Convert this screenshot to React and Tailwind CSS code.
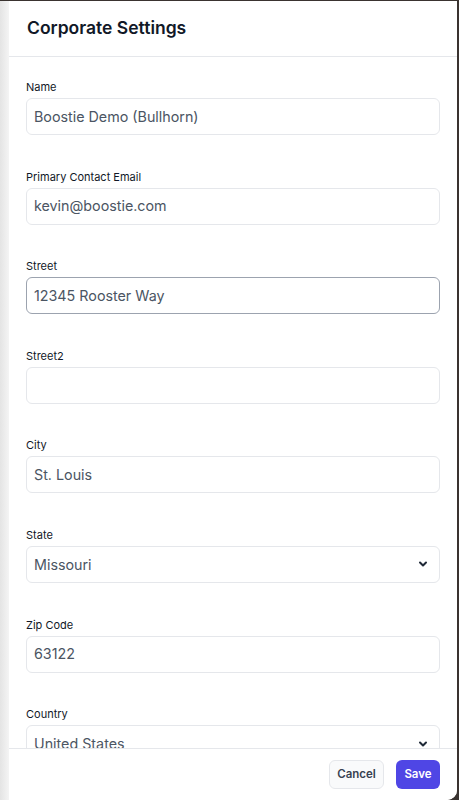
import React from "react";

function Field({ label, value, focused, select }) {
  return (
    <div className="flex flex-col">
      <label className="text-[11px] leading-[16px] text-[#111827] font-normal">{label}</label>
      <div
        className={
          "mt-[3px] h-[37px] rounded-[6px] border flex items-center px-[7px] text-[14.3px] text-[#4b5563] " +
          (focused ? "border-[#9ca3af]" : "border-[#e5e7eb]")
        }
      >
        <span className="flex-1 truncate">{value}</span>
        {select && (
          <svg width="10" height="8" viewBox="0 0 10 8" className="mr-[4px]">
            <path d="M2 2.5 L5 5.5 L8 2.5" stroke="#1f2937" strokeWidth="2" fill="none" strokeLinecap="round" strokeLinejoin="round" />
          </svg>
        )}
      </div>
    </div>
  );
}

export default function App() {
  const fields = [
    { label: "Name", value: "Boostie Demo (Bullhorn)" },
    { label: "Primary Contact Email", value: "kevin@boostie.com" },
    { label: "Street", value: "12345 Rooster Way", focused: true },
    { label: "Street2", value: "" },
    { label: "City", value: "St. Louis" },
    { label: "State", value: "Missouri", select: true },
    { label: "Zip Code", value: "63122" },
    { label: "Country", value: "United States", select: true },
  ];
  return (
    <div className="w-[459px] h-[800px] bg-[#3a3330] overflow-hidden pt-[1px] pr-[2px]" style={{ fontFamily: "Inter, 'Noto Sans', sans-serif" }}>
      <div className="h-[799px] flex rounded-br-[10px] overflow-hidden bg-white">
        <div className="w-[9px] bg-gradient-to-r from-[#e4e4e4] to-[#f4f4f4]" />
        <div className="flex-1 flex flex-col bg-white">
          <div className="h-[56px] border-b border-[#e5e7eb] flex items-center px-[18px]">
            <h1 className="text-[17.5px] font-semibold text-[#111827]">Corporate Settings</h1>
          </div>
          <div className="flex-1 overflow-hidden px-[17px] pt-[22px]">
            <div className="flex flex-col gap-[33.6px]">
              {fields.map((f) => (
                <Field key={f.label} {...f} />
              ))}
            </div>
          </div>
          <div className="h-[52px] border-t border-[#e5e7eb] flex items-center justify-end gap-[12px] px-[17px]">
            <button className="h-[29px] w-[55px] rounded-[6px] border border-[#e5e7eb] bg-[#f9fafb] text-[11.5px] font-semibold text-[#374151]">Cancel</button>
            <button className="h-[29px] w-[44px] rounded-[6px] bg-[#4f46e5] text-[11.5px] font-semibold text-white">Save</button>
          </div>
        </div>
      </div>
    </div>
  );
}
